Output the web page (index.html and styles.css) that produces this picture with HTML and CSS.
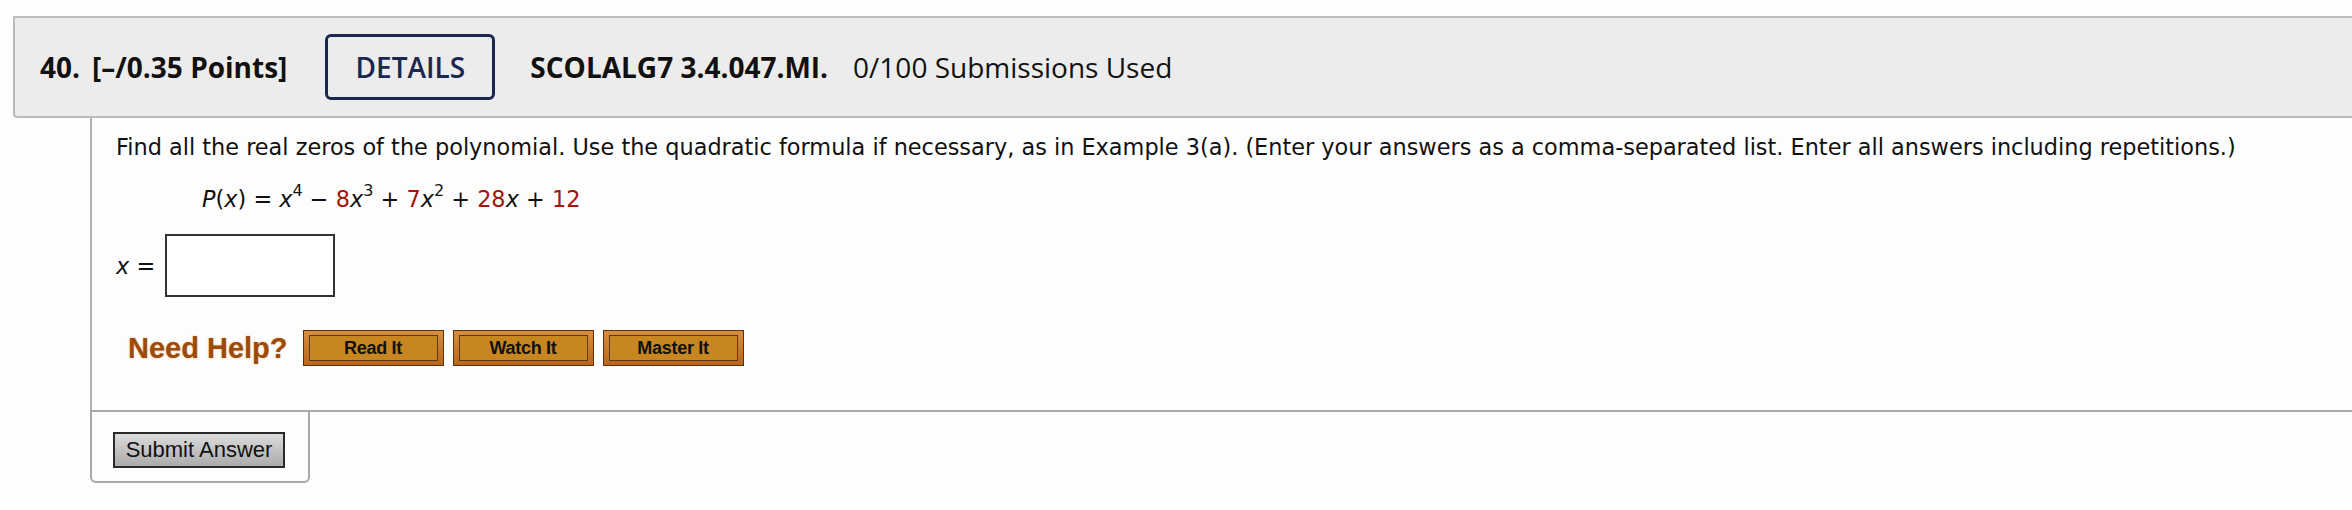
FILE: index.html
```html
<!DOCTYPE html>
<html>
<head>
<meta charset="utf-8">
<link rel="stylesheet" href="styles.css">
</head>
<body>
<div class="question">
  <div class="qhead">
    <span class="qnum">40.</span>
    <span class="qpts">[–/0.35 Points]</span>
    <span class="details">DETAILS</span>
    <span class="qcode">SCOLALG7 3.4.047.MI.</span>
    <span class="qsubs">0/100 Submissions Used</span>
  </div>
  <div class="qbody">
    <p class="prompt">Find all the real zeros of the polynomial. Use the quadratic formula if necessary, as in Example 3(a). (Enter your answers as a comma-separated list. Enter all answers including repetitions.)</p>
    <p class="eq"><i>P</i>(<i>x</i>) = <i>x</i><sup>4</sup> − <span class="c">8</span><i>x</i><sup>3</sup> + <span class="c">7</span><i>x</i><sup>2</sup> + <span class="c">28</span><i>x</i> + <span class="c">12</span></p>
    <div class="answer"><span class="lbl"><i>x</i> =</span><span class="box"></span></div>
    <div class="help">
      <span class="needhelp">Need Help?</span>
      <span class="hbtn"><span>Read It</span></span>
      <span class="hbtn"><span>Watch It</span></span>
      <span class="hbtn"><span>Master It</span></span>
    </div>
  </div>
  <div class="qfoot">
    <div class="submitbox"><span class="submit">Submit Answer</span></div>
  </div>
</div>
</body>
</html>
```
FILE: styles.css
```css
html, body {
  margin: 0;
  padding: 0;
  background: #fdfdfd;
  overflow: hidden;
}
.question {
  width: 2400px;
  padding-top: 16px;
  padding-left: 13px;
}
.qhead {
  height: 98px;
  background: #ececec;
  border-top: 2px solid #bcbcbc;
  border-bottom: 2px solid #bcbcbc;
  border-left: 2px solid #bcbcbc;
  border-radius: 0 0 0 4px;
  display: flex;
  align-items: center;
  padding-left: 25px;
  font-family: "Open Sans", sans-serif;
  font-size: 28px;
  color: #111;
}
.qnum, .qpts, .qcode {
  font-weight: 700;
}
.qnum { margin-right: 12px; }
.qpts { margin-right: 38px; }
.details {
  box-sizing: border-box;
  width: 170px;
  height: 66px;
  border: 3px solid #1b2750;
  border-radius: 6px;
  color: #1b2750;
  font-weight: 600;
  display: flex;
  align-items: center;
  justify-content: center;
  margin-right: 35px;
}
.qcode { margin-right: 25px; }
.qbody {
  margin-left: 77px;
  border-left: 2px solid #b0b0b0;
  padding-left: 24px;
  padding-top: 13px;
  height: 279px;
  font-family: Verdana, "DejaVu Sans", sans-serif;
  font-size: 22.4px;
  color: #111;
}
.prompt {
  margin: 0;
  line-height: 32px;
}
.eq {
  margin: 20px 0 0 86px;
  line-height: 32px;
}
.eq sup {
  font-size: 16px;
  line-height: 0;
  vertical-align: 11px;
}
.c { color: #a3140b; }
.answer {
  display: flex;
  align-items: center;
  margin-top: 19px;
}
.lbl { margin-right: 10px; }
.box {
  display: block;
  width: 166px;
  height: 59px;
  border: 2px solid #333;
  background: #fff;
}
.help {
  display: flex;
  align-items: center;
  margin-top: 33px;
  margin-left: 12px;
  font-family: "Liberation Sans", Arial, sans-serif;
}
.needhelp {
  font-size: 29px;
  font-weight: 700;
  color: #9c4b0c;
  text-shadow: 0 0 2px #e8b070;
  margin-right: 15px;
}
.hbtn {
  box-sizing: border-box;
  width: 141px;
  height: 36px;
  border: 1px solid #5b300c;
  background: linear-gradient(#d88d3e, #b9661b);
  padding: 4px 5px;
  margin-right: 9px;
  display: flex;
}
.hbtn span {
  flex: 1;
  border: 1px solid #5a3a14;
  background: #c7861f;
  display: flex;
  align-items: center;
  justify-content: center;
  font-size: 18px;
  font-weight: 700;
  letter-spacing: -0.3px;
  color: #111;
}
.qfoot {
  margin-left: 77px;
  border-top: 2px solid #aaaaaa;
}
.submitbox {
  box-sizing: border-box;
  width: 220px;
  border: 2px solid #a8a8a8;
  border-top: none;
  border-radius: 0 0 6px 6px;
  padding: 20px 0 13px 21px;
}
.submit {
  display: inline-block;
  box-sizing: border-box;
  width: 172px;
  height: 36px;
  border: 2px solid #2a2a2a;
  background: linear-gradient(#dcdcdc, #ababab);
  font-family: "Liberation Sans", Arial, sans-serif;
  font-size: 22px;
  line-height: 32px;
  text-align: center;
  color: #111;
}
```
